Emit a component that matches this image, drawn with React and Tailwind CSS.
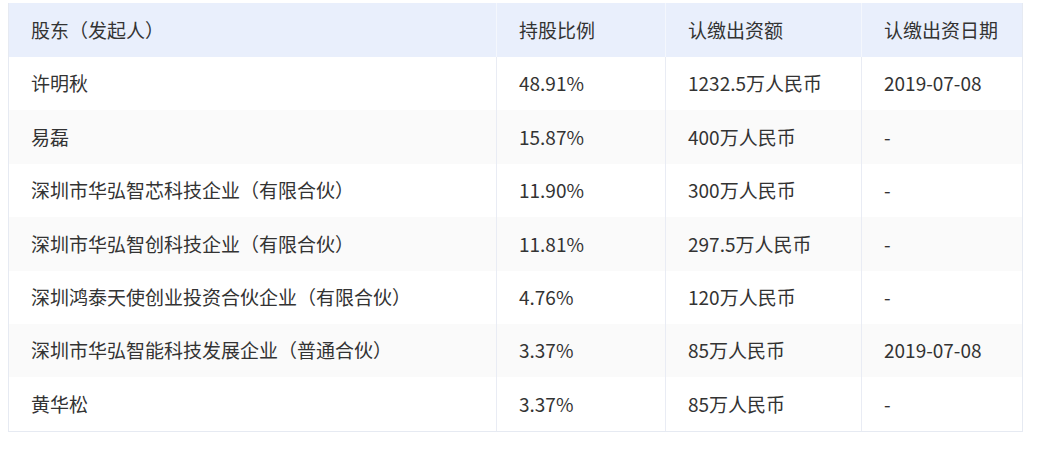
import React from "react";

const rows = [
  ["许明秋", "48.91%", "1232.5万人民币", "2019-07-08"],
  ["易磊", "15.87%", "400万人民币", "-"],
  ["深圳市华弘智芯科技企业（有限合伙）", "11.90%", "300万人民币", "-"],
  ["深圳市华弘智创科技企业（有限合伙）", "11.81%", "297.5万人民币", "-"],
  ["深圳鸿泰天使创业投资合伙企业（有限合伙）", "4.76%", "120万人民币", "-"],
  ["深圳市华弘智能科技发展企业（普通合伙）", "3.37%", "85万人民币", "2019-07-08"],
  ["黄华松", "3.37%", "85万人民币", "-"],
];

const headers = ["股东（发起人）", "持股比例", "认缴出资额", "认缴出资日期"];

export default function App() {
  return (
    <div
      className="w-[1053px] h-[459px] bg-white pt-[3px] pl-[8px]"
      style={{ fontFamily: '"Noto Sans CJK SC", "Noto Sans", sans-serif' }}
    >
      <div className="w-[1015px] border border-[#e6eaf2] border-t-0 text-[19px] text-[#333333]">
        <div className="grid grid-cols-[488px_169px_196px_1fr] h-[54px] bg-[#e9effc]">
          {headers.map((h, i) => (
            <div
              key={i}
              className={`flex items-center pl-[22px] whitespace-nowrap ${i < 3 ? "border-r border-[#f4f7fd]" : ""}`}
            >
              {h}
            </div>
          ))}
        </div>
        {rows.map((r, ri) => (
          <div
            key={ri}
            className={`grid grid-cols-[488px_169px_196px_1fr] h-[53.4px] ${ri % 2 === 1 ? "bg-[#fafafa]" : "bg-white"}`}
          >
            {r.map((c, ci) => (
              <div
                key={ci}
                className={`flex items-center pl-[22px] whitespace-nowrap ${ci < 3 ? "border-r border-[#e9ecf4]" : ""}`}
              >
                {c}
              </div>
            ))}
          </div>
        ))}
      </div>
    </div>
  );
}
